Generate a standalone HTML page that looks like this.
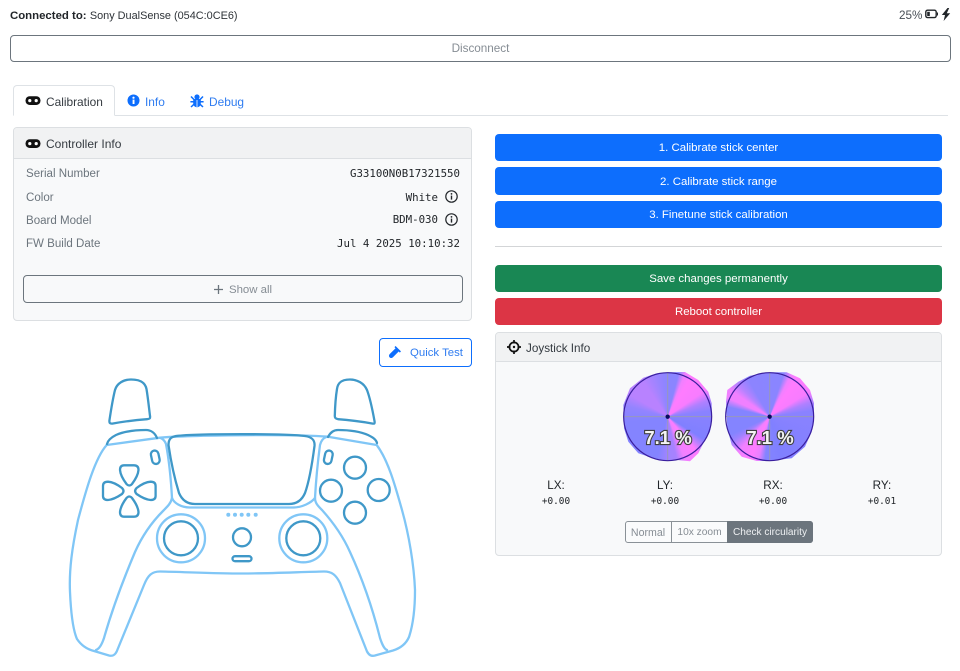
<!DOCTYPE html>
<html><head><meta charset="utf-8"><style>
html,body{margin:0;padding:0;background:#fff}
body{width:960px;height:671px;position:relative;overflow:hidden;font-family:"Liberation Sans",sans-serif;font-size:11.7px;color:#212529}
.a{position:absolute;white-space:nowrap}
.box{position:absolute;box-sizing:border-box}
.btn{position:absolute;box-sizing:border-box;border-radius:4px;text-align:center;white-space:nowrap}
.p{background:#0d6efd;color:#fff}
.mono{font-family:"DejaVu Sans Mono","Liberation Mono",monospace;font-size:10.75px;color:#212529}
.lbl{color:#6c757d;left:26px;font-size:11.55px}
.val{text-align:center;width:100px}
.pct{position:absolute;font-size:18.5px;font-weight:bold;color:#f4f4f4;-webkit-text-stroke:2.2px #3f3f3f;paint-order:stroke fill;width:80px;text-align:center;top:427px;line-height:22px}
svg{position:absolute;overflow:visible}
</style></head><body>

<div class="a" style="left:10px;top:7.5px;line-height:15px"><b style="font-size:11.4px">Connected to:</b> <span style="color:#2e3338;font-size:10.9px">Sony DualSense (054C:0CE6)</span></div>
<div class="a" style="left:899px;top:7.5px;line-height:15px;color:#495057;font-size:11.7px">25%</div>
<svg style="left:925px;top:9px" width="13" height="10" viewBox="0 0 13 10"><rect x=".8" y="1.2" width="10.4" height="7.4" rx="1.8" fill="none" stroke="#212529" stroke-width="1.4"/><rect x="2.2" y="2.8" width="2.6" height="4.2" fill="#212529"/><rect x="12" y="3.5" width="1" height="3" fill="#212529"/></svg>
<svg style="left:941px;top:8px" width="10" height="13" viewBox="0 0 10 13"><path d="M6.5 0 L.8 7 H4 L2.6 13 L9.2 5.2 H5.8 L8.2 0Z" fill="#212529"/></svg>

<div class="btn" style="left:10px;top:35px;width:941px;height:27px;border:1px solid #6c757d;color:#868d94;line-height:26px;background:#fff">Disconnect</div>

<!-- tabs -->
<div class="box" style="left:13px;top:115px;width:935px;height:1px;background:#dee2e6"></div>
<div class="box" style="left:13px;top:85px;width:102px;height:31px;border:1px solid #dee2e6;border-bottom:1px solid #fff;border-radius:4px 4px 0 0;background:#fff"></div>
<svg style="left:25px;top:95px" width="16" height="11" viewBox="0 0 16 11"><rect x="0.5" y="1.2" width="15" height="8.8" rx="4.2" fill="#111"/><circle cx="4.8" cy="5.6" r="1.6" fill="#fff"/><circle cx="11.2" cy="5.6" r="1.6" fill="#fff"/></svg>
<div class="a" style="left:46px;top:94.5px;line-height:15px;color:#343a40;font-size:11.9px">Calibration</div>
<svg style="left:127px;top:94px" width="13" height="13" viewBox="0 0 13 13"><circle cx="6.5" cy="6.5" r="6" fill="#0d6efd"/><rect x="5.6" y="5.6" width="1.9" height="4.4" fill="#fff"/><circle cx="6.5" cy="3.7" r="1.1" fill="#fff"/></svg>
<div class="a" style="left:145px;top:94.5px;line-height:15px;color:#2f7cf0;font-size:11.9px">Info</div>
<svg style="left:190px;top:94px" width="14" height="14" viewBox="0 0 14 14"><g fill="#0d6efd"><circle cx="7" cy="3" r="2.6"/><path d="M3.2 5 H10.8 V9.5 A3.8 3.8 0 0 1 3.2 9.5Z"/></g><path d="M1 2.5 L3.8 5.4 M13 2.5 L10.2 5.4 M.4 7.8 H3.6 M13.6 7.8 H10.4 M1 13 L3.8 10.4 M13 13 L10.2 10.4" stroke="#0d6efd" stroke-width="1.5" fill="none"/><path d="M7 6 V13" stroke="#fff" stroke-width=".8"/></svg>
<div class="a" style="left:209px;top:94.5px;line-height:15px;color:#2f7cf0;font-size:11.9px">Debug</div>

<!-- controller info card -->
<div class="box" style="left:13px;top:127px;width:459px;height:194px;background:#f8f9fa;border:1px solid #dcdfe2;border-radius:4px"></div>
<div class="box" style="left:14px;top:128px;width:457px;height:31px;background:#f1f2f3;border-bottom:1px solid #dcdfe2;border-radius:3px 3px 0 0"></div>
<svg style="left:25px;top:138px" width="16" height="11" viewBox="0 0 16 11"><rect x="0.5" y="1.2" width="15" height="8.8" rx="4.2" fill="#111"/><circle cx="4.8" cy="5.6" r="1.6" fill="#fff"/><circle cx="11.2" cy="5.6" r="1.6" fill="#fff"/></svg>
<div class="a" style="left:46px;top:136.5px;line-height:15px;color:#343a40;font-size:12px">Controller Info</div>

<div class="a lbl" style="top:166.5px;line-height:15px">Serial Number</div>
<div class="a lbl" style="top:190.5px;line-height:15px">Color</div>
<div class="a lbl" style="top:213.5px;line-height:15px">Board Model</div>
<div class="a lbl" style="top:236.5px;line-height:15px">FW Build Date</div>
<div class="a mono" style="right:500px;top:166px;line-height:15px">G33100N0B17321550</div>
<div class="a mono" style="right:522px;top:190px;line-height:15px">White</div>
<div class="a mono" style="right:522px;top:212px;line-height:15px">BDM-030</div>
<div class="a mono" style="right:500px;top:236px;line-height:15px">Jul 4 2025 10:10:32</div>
<svg style="left:445px;top:189.5px" width="13" height="13" viewBox="0 0 13 13"><circle cx="6.5" cy="6.5" r="5.7" fill="none" stroke="#212529" stroke-width="1.2"/><rect x="5.8" y="5.6" width="1.4" height="4" fill="#212529"/><circle cx="6.5" cy="3.9" r=".9" fill="#212529"/></svg>
<svg style="left:445px;top:212.5px" width="13" height="13" viewBox="0 0 13 13"><circle cx="6.5" cy="6.5" r="5.7" fill="none" stroke="#212529" stroke-width="1.2"/><rect x="5.8" y="5.6" width="1.4" height="4" fill="#212529"/><circle cx="6.5" cy="3.9" r=".9" fill="#212529"/></svg>

<div class="btn" style="left:23px;top:275px;width:440px;height:28px;border:1px solid #6c757d;border-radius:4px;background:#f8f9fa"></div>
<svg style="left:213px;top:284px" width="11" height="11" viewBox="0 0 11 11"><path d="M5.5 1 V10 M1 5.5 H10" stroke="#6c757d" stroke-width="1.3"/></svg>
<div class="a" style="left:229px;top:282.5px;line-height:15px;color:#868d94;font-size:11.4px">Show all</div>

<div class="btn" style="left:379px;top:338px;width:93px;height:29px;border:1px solid #0d6efd;background:#fff"></div>
<svg style="left:388px;top:346px" width="13" height="13" viewBox="0 0 13 13"><path d="M8.2 1.6 L11.4 4.8 L5.2 11 C4 12.2 2.6 12.4 1.6 11.4 C.6 10.4 .8 9 2 7.8Z" fill="#0d6efd"/><path d="M7 .6 L12.4 6" stroke="#0d6efd" stroke-width="1.6"/></svg>
<div class="a" style="left:410px;top:345.5px;line-height:15px;color:#2f7cf0;font-size:11.4px">Quick Test</div>

<!-- right column -->
<div class="btn p" style="left:495px;top:134px;width:447px;height:27px;line-height:28px;font-size:11.45px">1. Calibrate stick center</div>
<div class="btn p" style="left:495px;top:167px;width:447px;height:28px;line-height:30px;font-size:11.45px">2. Calibrate stick range</div>
<div class="btn p" style="left:495px;top:201px;width:447px;height:27px;line-height:29px;font-size:11.45px">3. Finetune stick calibration</div>
<div class="box" style="left:495px;top:246px;width:447px;height:1px;background:#d3d5d7"></div>
<div class="btn" style="left:495px;top:265px;width:447px;height:27px;line-height:28px;background:#198754;color:#fff;font-size:11.45px">Save changes permanently</div>
<div class="btn" style="left:495px;top:298px;width:447px;height:27px;line-height:28px;background:#dc3545;color:#fff;font-size:11.45px">Reboot controller</div>

<div class="box" style="left:495px;top:332px;width:447px;height:224px;background:#f8f9fa;border:1px solid #dcdfe2;border-radius:4px"></div>
<div class="box" style="left:496px;top:333px;width:445px;height:29px;background:#f1f2f3;border-bottom:1px solid #dcdfe2;border-radius:3px 3px 0 0"></div>
<svg style="left:507px;top:340px" width="14" height="14" viewBox="0 0 14 14"><circle cx="7" cy="7" r="4.6" fill="none" stroke="#111" stroke-width="1.7"/><path d="M7 0 V3.5 M7 10.5 V14 M0 7 H3.5 M10.5 7 H14" stroke="#111" stroke-width="1.7"/><circle cx="7" cy="7" r="1.2" fill="#111"/></svg>
<div class="a" style="left:526px;top:340.5px;line-height:15px;color:#343a40;font-size:11.7px">Joystick Info</div>

<!-- circularity charts -->
<div class="box" style="left:610px;top:365px;width:110px;height:105px;clip-path:polygon(58.3px 7.3px,75px 7px,88.3px 15px,98.3px 26.7px,101.7px 38.3px,102px 53.3px,100px 66.7px,93.3px 78.3px,88.3px 88.3px,80px 96.3px,66.7px 95px,58.3px 96px,43.3px 93.3px,28.3px 88.3px,18.3px 76.7px,14px 63.3px,13.3px 40px,20px 23.3px,33.3px 12.7px,46.7px 8.3px);background:conic-gradient(from 0deg at 57.67px 51.67px,#8a85ff 0deg,#8a85ff 14deg,#f080ff 22deg,#ff7cff 30deg,#f87cff 55deg,#b080ff 68deg,#8a82ff 82deg,#8080ff 122deg,#c080ff 132deg,#ff7cff 140deg,#f080ff 158deg,#a882ff 168deg,#a084ff 180deg,#8484ff 195deg,#8484ff 262deg,#9484ff 285deg,#b882ff 300deg,#b882ff 325deg,#9a84ff 345deg,#8a85ff 360deg)"></div>
<div class="box" style="left:712px;top:365px;width:110px;height:105px;clip-path:polygon(57.7px 7.3px,74.7px 7.3px,88px 13.3px,98px 25px,102px 38.3px,102px 53.3px,99.7px 66.7px,93px 81.7px,79.7px 93.3px,57.7px 96px,44.7px 96px,29.7px 91.7px,19.7px 80px,15.3px 63.3px,14px 36.7px,15.3px 25px,26.3px 16.7px,38px 10.7px);background:conic-gradient(from 0deg at 57.67px 51.67px,#8a85ff 0deg,#8a85ff 18deg,#f080ff 27deg,#ff7cff 35deg,#f87cff 58deg,#b080ff 70deg,#8a82ff 82deg,#8080ff 165deg,#8484ff 186deg,#e880ff 195deg,#ff7cff 205deg,#f080ff 222deg,#a082ff 236deg,#8484ff 245deg,#8484ff 283deg,#f080ff 294deg,#f080ff 304deg,#b882ff 315deg,#8c84ff 330deg,#8a85ff 360deg)"></div>
<svg style="left:610px;top:365px" width="220" height="105" viewBox="0 0 660 315">
<g fill="none" stroke="#9a9ab4" stroke-width="3" opacity=".9">
<path d="M41 155 H305 M173 23 V287 M347 155 H611 M479 23 V287"/></g>
<g fill="none" stroke="#3a1f9e" stroke-width="3.6"><circle cx="173" cy="155" r="132"/><circle cx="479" cy="155" r="132"/></g>
<circle cx="173" cy="155" r="6.5" fill="#0a0a60"/><circle cx="479" cy="155" r="6.5" fill="#0a0a60"/>
</svg>
<div class="pct" style="left:628px">7.1 %</div>
<div class="pct" style="left:730px">7.1 %</div>

<div class="a val" style="left:506px;top:478px;line-height:15px;font-size:11.7px">LX:</div>
<div class="a val" style="left:615px;top:478px;line-height:15px;font-size:11.7px">LY:</div>
<div class="a val" style="left:723px;top:478px;line-height:15px;font-size:11.7px">RX:</div>
<div class="a val" style="left:832px;top:478px;line-height:15px;font-size:11.7px">RY:</div>
<div class="a val mono" style="left:506px;top:494px;line-height:15px;font-size:9.4px">+0.00</div>
<div class="a val mono" style="left:615px;top:494px;line-height:15px;font-size:9.4px">+0.00</div>
<div class="a val mono" style="left:723px;top:494px;line-height:15px;font-size:9.4px">+0.00</div>
<div class="a val mono" style="left:832px;top:494px;line-height:15px;font-size:9.4px">+0.01</div>

<div class="box" style="left:625px;top:521px;width:188px;height:22px;border:1px solid #8a9197;border-radius:3px;background:#fafbfc"></div>
<div class="box" style="left:671px;top:521px;width:1px;height:22px;background:#8a9197"></div>
<div class="box" style="left:727px;top:521px;width:86px;height:22px;background:#6c757d;border-radius:0 3px 3px 0"></div>
<div class="a" style="left:625px;width:46px;text-align:center;top:521.5px;line-height:22px;font-size:10.6px;color:#868d94">Normal</div>
<div class="a" style="left:672px;width:55px;text-align:center;top:521.5px;line-height:22px;font-size:10.2px;color:#868d94">10x zoom</div>
<div class="a" style="left:727px;width:86px;text-align:center;top:521.5px;line-height:22px;font-size:10.1px;color:#eef0f2">Check circularity</div>

<!-- controller -->
<svg style="left:0;top:0" width="480" height="671" viewBox="0 0 480 671" fill="none" stroke-linecap="round" stroke-linejoin="round">
<g stroke="#80c6f6" stroke-width="2.3">
<path d="M106.7 445 C95 458 86 490 78 520 C72 548 69 570 70 592 C71 615 73 630 77 639 C81 645 86 649 94 651 L109 655.5 C113 656.5 115 655 116.7 651.5 L144 585 C148 575 152 571.5 160 571.5 C185 572 215 573.5 242 573.5 C270 573.5 300 572 324 571.5 C332 571.5 336 575 340 583 L367 651.5 C369 655 371 656.5 375 655.5 L393 650.5 C401 648 406 644 409 637 C413 625 415 610 415 590 C414 565 409 535 402 510 C395 485 388 460 376.7 445"/>
<path d="M106.7 445 L160 437.7 C190 435 295 434 328 436.7 L376.7 445"/>
<path d="M96 650 C99 649 102 644 104 638 C112 610 124 578 135 552 C143 534 152 522 163 511 C168 506 171 503 172 498 C171 480 169 460 166 444 C165 441 163 439 160 437.7"/>
<path d="M387 650 C384 649 382 644 380 638 C373 610 362 578 350 552 C342 534 331 520 322 510 C318 506 315 503 315 498 C316 480 318 460 320 445 C321 441 323 438 327 436.7"/>
<path d="M172 498 C174 503 181 507.5 190 507.5 L293 507.5 C302 507.5 311 503 315 498"/>
<circle cx="181" cy="538.3" r="24"/>
<circle cx="303.3" cy="538.3" r="24"/>
</g>
<g fill="#80c6f6" stroke="none"><circle cx="228.3" cy="514.7" r="2"/><circle cx="235" cy="514.7" r="2"/><circle cx="241.7" cy="514.7" r="2"/><circle cx="248.3" cy="514.7" r="2"/><circle cx="255.7" cy="514.7" r="2"/></g>
<g stroke="#3f98c8" stroke-width="2.3">
<path d="M109.5 420 C111 410 113 398 115 390 C117 383 124 379.5 131 379.5 C139 379.5 145 381.5 146.5 389 C148 398 149 408 150 416 C150.5 418.5 149.5 419 147 419.2 C136 420 124 421.5 113 423.5 C110 424 109 423 109.5 420Z"/>
<path d="M107 444 C108 440 112 437 116 435 C124 431.5 136 430 146 430 C151 430 155 433 157 438"/>
<path d="M374.5 421 C372.5 410 370 398 367 390 C364 383 357 379.5 350 379.5 C343 379.5 338 381.5 337 389 C335.5 398 335 408 334.8 416 C334.8 418 335.5 418.5 338 419.2 C349 420 361 421.5 372 423.5 C374.5 424 375 423.5 374.5 421Z"/>
<path d="M377 443 C376 439 372 437 368 435 C360 431.5 348 430 338 430 C333 430 330 433 328 437"/>
<path d="M168.5 445 C168.5 439 171 437 176 436 C198 433.5 285 433.5 305 436 C312 437 315 440 314.5 446 C312 465 309 482 305 493 C302 500 297 504 289 504 L195 504 C187 504 182 500 179 493 C175 480 171 462 168.5 445Z"/>
<path d="M124 465.3 H134 Q138.5 465.3 138.5 470 Q138 476 132 484 Q129.3 487 126.5 484 Q120.5 476 120 470 Q120 465.3 124 465.3Z"/>
<path d="M124 516.7 H134 Q138.5 516.7 138.5 512 Q138 506 132 498 Q129.3 495 126.5 498 Q120.5 506 120 512 Q120 516.7 124 516.7Z"/>
<path d="M103 486 Q103 481.7 108 481.7 Q114 482 122 488 Q125 491 122 494 Q114 499.5 108 500 Q103 500 103 496Z"/>
<path d="M155.6 486 Q155.6 481.7 150.6 481.7 Q144.6 482 136.6 488 Q133.6 491 136.6 494 Q144.6 499.5 150.6 500 Q155.6 500 155.6 496Z"/>
<rect x="151.5" y="450.5" width="7.6" height="13.5" rx="3.8" transform="rotate(-12 155.3 457.3)"/>
<rect x="324.5" y="450.5" width="7.6" height="13.5" rx="3.8" transform="rotate(12 328.3 457.3)"/>
<circle cx="355" cy="467.7" r="11"/>
<circle cx="331" cy="490.7" r="11"/>
<circle cx="378.7" cy="490" r="11"/>
<circle cx="355" cy="512.7" r="11"/>
<circle cx="181" cy="538.3" r="17"/>
<circle cx="303.3" cy="538.3" r="17"/>
<circle cx="242" cy="537.3" r="9"/>
<rect x="232.5" y="556.2" width="19" height="5" rx="2.5"/>
</g>
</svg>
</body></html>
